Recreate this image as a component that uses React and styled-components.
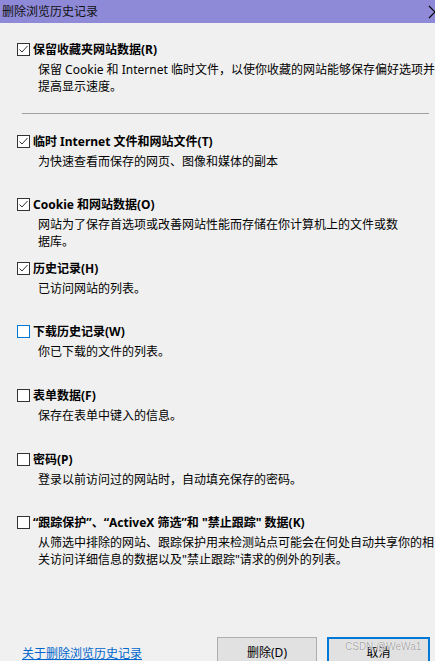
import React from 'react';
import styled, { createGlobalStyle } from 'styled-components';

const GlobalStyle = createGlobalStyle`
  html, body {
    margin: 0;
    padding: 0;
    background: #f0f0f0;
  }
  body {
    font-family: "Noto Sans", "Noto Sans CJK SC", sans-serif;
    font-size: 12px;
    color: #000;
  }
`;

const Window = styled.div`
  position: relative;
  width: 435px;
  height: 661px;
  overflow: hidden;
  background: #f0f0f0;
  display: flex;
  flex-direction: column;
`;

const TitleBar = styled.div`
  height: 23px;
  flex-shrink: 0;
  background: #8e8ad8;
  display: flex;
  align-items: center;
  justify-content: space-between;
  padding-left: 2px;
  font-size: 12px;
  line-height: 23px;
  color: #111;
`;

const CloseIcon = styled.svg`
  width: 14px;
  height: 14px;
  margin-right: -7px;
  flex-shrink: 0;
`;

const Content = styled.div`
  padding: 17.5px 0 0 17px;
  white-space: nowrap;
`;

const Option = styled.div`
  height: ${(p) => (p.$compact ? 'auto' : '63.67px')};
`;

const LabelRow = styled.label`
  display: flex;
  align-items: center;
  height: 17px;
  gap: 3px;
  margin-bottom: 3px;
  font-weight: 700;
  line-height: 17px;
`;

const Box = styled.span`
  width: 13px;
  height: 13px;
  box-sizing: border-box;
  flex-shrink: 0;
  border: 1px solid ${(p) => (p.$focus ? '#0078d7' : '#333')};
  background: #fff;
  display: flex;
  align-items: center;
  justify-content: center;
`;

const Desc = styled.div`
  padding-left: 21px;
  line-height: 17px;
`;

const Separator = styled.hr`
  border: none;
  border-top: 1px solid #a0a0a0;
  margin: 18.5px 6px 18.5px 5px;
  height: 0;
`;

const Footer = styled.div`
  display: flex;
  align-items: flex-start;
  margin-top: 59px;
  padding: 0 5px 0 22px;
`;

const HelpLink = styled.a`
  color: #0066cc;
  text-decoration: underline;
  margin-top: 8px;
  line-height: 17px;
  cursor: pointer;
`;

const Buttons = styled.div`
  display: flex;
  gap: 10px;
  margin-left: auto;
`;

const Button = styled.button`
  font-family: inherit;
  font-size: 12px;
  color: #000;
  background: #e1e1e1;
  box-sizing: border-box;
  width: ${(p) => (p.$default ? '103px' : '100px')};
  height: 24px;
  border: ${(p) => (p.$default ? '2px solid #0078d7' : '1px solid #adadad')};
  border-bottom: none;
  padding: ${(p) => (p.$default ? '4px' : '5px')} 0 0;
  line-height: 17px;
  vertical-align: top;
`;

const Watermark = styled.div`
  position: absolute;
  left: 345px;
  top: 641px;
  white-space: nowrap;
  font-family: "Liberation Sans", Arial, sans-serif;
  font-size: 10px;
  line-height: 12px;
  color: rgba(150, 150, 150, 0.85);
  text-shadow: 0 0 1px #fff, 0 0 1px #fff;
  pointer-events: none;
`;

const Check = () => (
  <svg width="11" height="11" viewBox="0 0 11 11">
    <path d="M1.5 5.5 L4 8 L9.5 2" fill="none" stroke="#333" strokeWidth="1" />
  </svg>
);

const options = [
  {
    label: '临时 Internet 文件和网站文件(T)',
    desc: ['为快速查看而保存的网页、图像和媒体的副本'],
    checked: true,
  },
  {
    label: 'Cookie 和网站数据(O)',
    desc: ['网站为了保存首选项或改善网站性能而存储在你计算机上的文件或数', '据库。'],
    checked: true,
  },
  {
    label: '历史记录(H)',
    desc: ['已访问网站的列表。'],
    checked: true,
  },
  {
    label: '下载历史记录(W)',
    desc: ['你已下载的文件的列表。'],
    focus: true,
  },
  {
    label: '表单数据(F)',
    desc: ['保存在表单中键入的信息。'],
  },
  {
    label: '密码(P)',
    desc: ['登录以前访问过的网站时，自动填充保存的密码。'],
  },
  {
    label: '“跟踪保护”、“ActiveX 筛选”和 "禁止跟踪" 数据(K)',
    desc: [
      '从筛选中排除的网站、跟踪保护用来检测站点可能会在何处自动共享你的相',
      '关访问详细信息的数据以及"禁止跟踪"请求的例外的列表。',
    ],
  },
];

const OptionBlock = ({ label, desc, checked, focus, compact }) => (
  <Option $compact={compact}>
    <LabelRow>
      <Box $focus={focus}>{checked && <Check />}</Box>
      {label}
    </LabelRow>
    {desc.map((line) => (
      <Desc key={line}>{line}</Desc>
    ))}
  </Option>
);

export default function App() {
  return (
    <>
      <GlobalStyle />
      <Window>
        <TitleBar>
          删除浏览历史记录
          <CloseIcon viewBox="0 0 14 14">
            <path d="M1 1 L13 13 M13 1 L1 13" stroke="#000" strokeWidth="1.2" fill="none" />
          </CloseIcon>
        </TitleBar>
        <Content>
          <OptionBlock
            compact
            checked
            label="保留收藏夹网站数据(R)"
            desc={['保留 Cookie 和 Internet 临时文件，以使你收藏的网站能够保存偏好选项并', '提高显示速度。']}
          />
          <Separator />
          {options.map((o) => (
            <OptionBlock key={o.label} {...o} />
          ))}
        </Content>
        <Footer>
          <HelpLink>关于删除浏览历史记录</HelpLink>
          <Buttons>
            <Button>删除(D)</Button>
            <Button $default>取消</Button>
          </Buttons>
        </Footer>
        <Watermark>CSDN @WeWa1</Watermark>
      </Window>
    </>
  );
}
